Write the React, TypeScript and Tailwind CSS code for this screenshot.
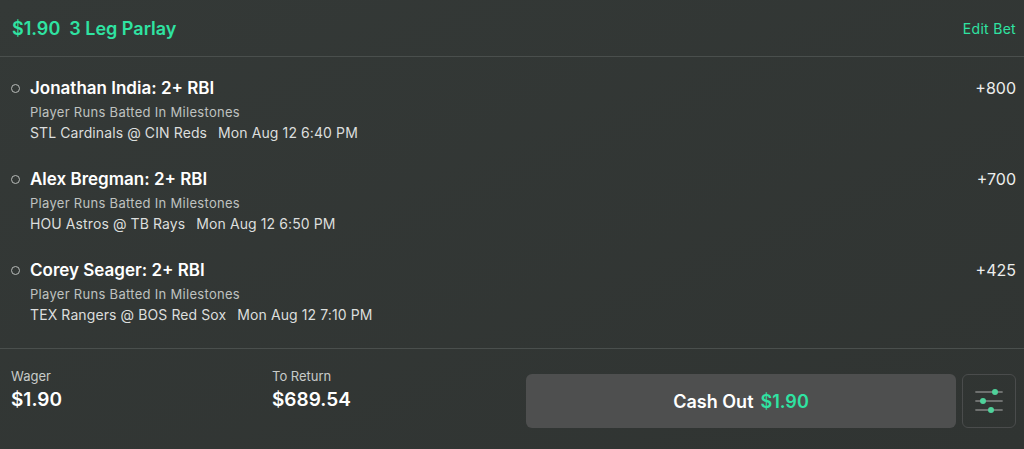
const legs = [
  {
    title: 'Jonathan India: 2+ RBI',
    market: 'Player Runs Batted In Milestones',
    game: 'STL Cardinals @ CIN Reds',
    time: 'Mon Aug 12 6:40 PM',
    odds: '+800',
  },
  {
    title: 'Alex Bregman: 2+ RBI',
    market: 'Player Runs Batted In Milestones',
    game: 'HOU Astros @ TB Rays',
    time: 'Mon Aug 12 6:50 PM',
    odds: '+700',
  },
  {
    title: 'Corey Seager: 2+ RBI',
    market: 'Player Runs Batted In Milestones',
    game: 'TEX Rangers @ BOS Red Sox',
    time: 'Mon Aug 12 7:10 PM',
    odds: '+425',
  },
];

const SlidersIcon = () => (
  <svg width="28" height="24" viewBox="0 0 28 24" fill="none">
    <line x1="1" y1="3" x2="27" y2="3" stroke="#6e706f" strokeWidth="1.8" strokeLinecap="round" />
    <line x1="1" y1="12" x2="27" y2="12" stroke="#6e706f" strokeWidth="1.8" strokeLinecap="round" />
    <line x1="1" y1="21" x2="27" y2="21" stroke="#6e706f" strokeWidth="1.8" strokeLinecap="round" />
    <circle cx="20" cy="3" r="3" fill="#4fd29a" />
    <circle cx="8" cy="12" r="3" fill="#4fd29a" />
    <circle cx="16" cy="21" r="3" fill="#4fd29a" />
  </svg>
);

export default function App() {
  return (
    <div
      className="flex h-[449px] w-[1024px] flex-col overflow-hidden bg-gradient-to-br from-[#343937] to-[#303432] text-white"
      style={{ fontFamily: 'Inter, "Noto Sans", sans-serif' }}
    >
      {/* Header */}
      <div className="flex h-[57px] items-center justify-between border-b border-[#4a4f4d] pl-3 pr-2">
        <div className="flex items-center gap-[9px] text-[18px] font-semibold text-[#2fe3a2]">
          <span>$1.90</span>
          <span>3 Leg Parlay</span>
        </div>
        <span className="text-[14px] tracking-[0.3px] text-[#2fe3a2]">Edit Bet</span>
      </div>

      {/* Legs */}
      <div className="flex flex-col gap-[25px] border-b border-[#4a4f4d] pt-[20px] pb-[23px]">
        {legs.map((leg) => (
          <div key={leg.title} className="flex items-start justify-between pr-2">
            <div className="flex items-start">
              <div className="flex h-[22px] w-[30px] items-center pl-[11px]">
                <div className="h-[9px] w-[9px] rounded-full border border-[#b8bbb9]" />
              </div>
              <div className="flex flex-col">
                <div className="text-[17px] leading-[22px] font-semibold">{leg.title}</div>
                <div className="mt-[4px] text-[13px] leading-[18px] tracking-[0.3px] text-[#bfc2c0]">
                  {leg.market}
                </div>
                <div className="mt-[2px] flex gap-[11px] text-[14px] leading-[20px] tracking-[0.1px] text-[#dcdedd]">
                  <span>{leg.game}</span>
                  <span>{leg.time}</span>
                </div>
              </div>
            </div>
            <div className="text-[16px] leading-[22px] text-[#ecedec]">{leg.odds}</div>
          </div>
        ))}
      </div>

      {/* Footer */}
      <div className="flex items-start pl-[11px] pr-2 pt-[19px]">
        <div className="flex w-[261px] flex-col">
          <span className="text-[13px] leading-[16px] text-[#c8cbc9]">Wager</span>
          <span className="mt-[5px] text-[19px] leading-[22px] font-semibold">$1.90</span>
        </div>
        <div className="flex w-[254px] flex-col">
          <span className="text-[13px] leading-[16px] text-[#c8cbc9]">To Return</span>
          <span className="mt-[5px] text-[19px] leading-[22px] font-semibold">$689.54</span>
        </div>
        <div className="mt-[6px] flex flex-1 items-center gap-[6px]">
          <div className="flex h-[54px] flex-1 items-center justify-center gap-[7px] rounded-[6px] bg-[#4e4f4f] text-[18px] font-semibold">
            <span>Cash Out</span>
            <span className="text-[#2fe3a2]">$1.90</span>
          </div>
          <div className="flex h-[54px] w-[54px] items-center justify-center rounded-[6px] border border-[#4a4c4c]">
            <SlidersIcon />
          </div>
        </div>
      </div>
    </div>
  );
}
